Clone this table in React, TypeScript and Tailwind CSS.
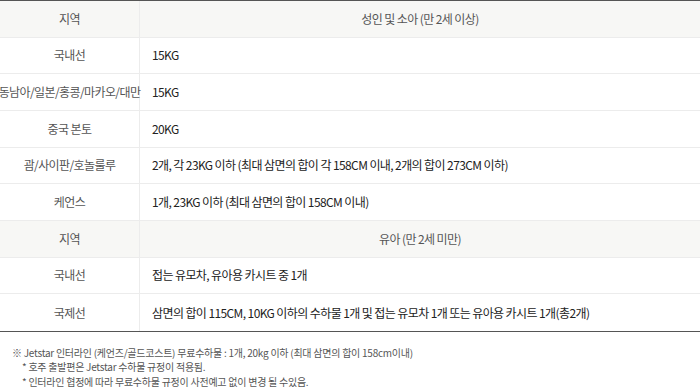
import React from 'react';

const font = { fontFamily: '"Noto Sans CJK KR", "Noto Sans", sans-serif' };

type Row = { label: string; value: string; head?: boolean };

const rows: Row[] = [
  { label: '지역', value: '성인 및 소아 (만 2세 이상)', head: true },
  { label: '국내선', value: '15KG' },
  { label: '동남아/일본/홍콩/마카오/대만', value: '15KG' },
  { label: '중국 본토', value: '20KG' },
  { label: '괌/사이판/호놀룰루', value: '2개, 각 23KG 이하 (최대 삼면의 합이 각 158CM 이내, 2개의 합이 273CM 이하)' },
  { label: '케언스', value: '1개, 23KG 이하 (최대 삼면의 합이 158CM 이내)' },
  { label: '지역', value: '유아 (만 2세 미만)', head: true },
  { label: '국내선', value: '접는 유모차, 유아용 카시트 중 1개' },
  { label: '국제선', value: '삼면의 합이 115CM, 10KG 이하의 수하물 1개 및 접는 유모차 1개 또는 유아용 카시트 1개(총2개)' },
];

const App: React.FC = () => {
  return (
    <div className="w-[700px] h-[390px] overflow-hidden bg-white" style={font}>
      {/* Baggage table */}
      <div className="border-t border-b border-[#555]">
        {rows.map((r, i) => (
          <div
            key={i}
            className={`flex h-[36.67px] text-[12px] tracking-[-0.6px] ${
              i < rows.length - 1 ? 'border-b border-[#ececec]' : ''
            } ${r.head ? 'bg-[#f7f7f5]' : 'bg-white'}`}
          >
            <div className="w-[140px] shrink-0 flex items-center justify-center whitespace-nowrap text-[#555] border-r border-[#ececec]">
              {r.label}
            </div>
            <div
              className={`flex-1 flex items-center whitespace-nowrap ${
                r.head ? 'justify-center text-[#555]' : 'pl-3 text-[#222]'
              }`}
            >
              {r.value}
            </div>
          </div>
        ))}
      </div>

      {/* Notes */}
      <div className="pt-[14px] pl-3 text-[10px] leading-[14.5px] text-[#555] tracking-[-0.25px]">
        <p>※ Jetstar 인터라인 (케언즈/골드코스트) 무료수하물 : 1개, 20kg 이하 (최대 삼면의 합이 158cm이내)</p>
        <p className="pl-[10px]">* 호주 출발편은 Jetstar 수하물 규정이 적용됨.</p>
        <p className="pl-[10px]">* 인터라인 협정에 따라 무료수하물 규정이 사전예고 없이 변경 될 수있음.</p>
      </div>
    </div>
  );
};

export default App;
